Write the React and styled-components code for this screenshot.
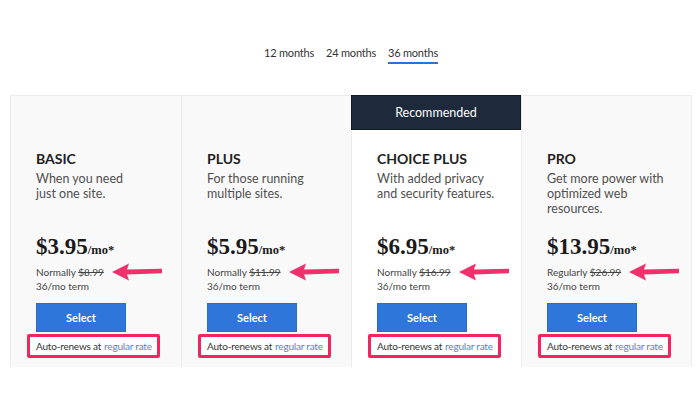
import React from "react";
import styled, { createGlobalStyle } from "styled-components";

const plans = [
  {
    name: "BASIC",
    desc: ["When you need", "just one site."],
    price: "$3.95",
    label: "Normally",
    old: "$8.99",
  },
  {
    name: "PLUS",
    desc: ["For those running", "multiple sites."],
    price: "$5.95",
    label: "Normally",
    old: "$11.99",
  },
  {
    name: "CHOICE PLUS",
    desc: ["With added privacy", "and security features."],
    price: "$6.95",
    label: "Normally",
    old: "$16.99",
    recommended: true,
  },
  {
    name: "PRO",
    desc: ["Get more power with", "optimized web", "resources."],
    price: "$13.95",
    label: "Regularly",
    old: "$26.99",
  },
];

const GlobalStyle = createGlobalStyle`
  body {
    margin: 0;
    background: #fff;
    font-family: Lato, "Open Sans", sans-serif;
    color: #2d2d2d;
  }
`;

const Page = styled.div`
  width: 700px;
  height: 420px;
  overflow: hidden;
`;

const Tabs = styled.div`
  display: flex;
  justify-content: center;
  gap: 12px;
  padding: 44px 0 0 2px;
  margin-bottom: 31px;
`;

const Tab = styled.div`
  font-size: 11px;
  letter-spacing: -0.2px;
  color: #333;
  height: 20px;
  line-height: 17px;
  box-sizing: border-box;
  border-bottom: 2px solid ${(p) => (p.active ? "#2f6fd6" : "transparent")};
`;

const Grid = styled.div`
  display: grid;
  grid-template-columns: repeat(4, 1fr);
  width: 682px;
  margin-left: 10px;
  border: 1px solid #ececec;
  border-bottom: none;
  box-sizing: border-box;
`;

const Card = styled.div`
  display: flex;
  flex-direction: column;
  min-width: 0;
  background: ${(p) => (p.recommended ? "#fff" : "#f9f9f9")};
  border-left: ${(p) => (p.first ? "none" : "1px solid #ececec")};
`;

const Banner = styled.div`
  height: 33px;
  margin: -1px 0 0 -1px;
  background: #1e293b;
  border: 1px solid #111827;
  color: #fff;
  font-size: 12.5px;
  display: flex;
  align-items: center;
  justify-content: center;
`;

const Body = styled.div`
  display: flex;
  flex-direction: column;
  align-items: flex-start;
  padding: ${(p) => (p.recommended ? "20px" : "54px")} 0 9px 25px;
`;

const Title = styled.div`
  font-size: 14px;
  font-weight: 700;
  line-height: 17px;
  color: #222;
`;

const Desc = styled.div`
  margin-top: 4px;
  font-size: 12.5px;
  line-height: 15px;
  color: #505050;
  height: 45px;
  white-space: nowrap;
`;

const Price = styled.div`
  margin-top: 18px;
  font-family: "Liberation Serif", serif;
  font-weight: 700;
  font-size: 23px;
  line-height: 26px;
  color: #1a1a1a;
`;

const Per = styled.span`
  font-size: 12.5px;
`;

const Note = styled.div`
  margin-top: 2px;
  display: flex;
  align-items: center;
  gap: 8px;
  font-size: 10px;
  line-height: 14px;
  color: #444;
  height: 14px;
  white-space: nowrap;

  svg {
    display: block;
    margin: -3px 0;
  }
`;

const Old = styled.s`
  color: #444;
`;

const Term = styled.div`
  font-size: 10px;
  line-height: 14px;
  color: #444;
`;

const Button = styled.button`
  margin-top: 10px;
  width: 90px;
  height: 29px;
  border: 1px solid #2a6bcf;
  background: #2f76db;
  color: #fff;
  font-family: Lato, sans-serif;
  font-weight: 700;
  font-size: 11px;
  cursor: pointer;
`;

const Renew = styled.div`
  margin: 2px 0 0 -9px;
  height: 24px;
  box-sizing: border-box;
  padding: 0 5px 0 6px;
  border: 3px solid #f2255f;
  border-radius: 2px;
  background: #fff;
  display: flex;
  align-items: center;
  font-size: 10px;
  letter-spacing: -0.2px;
  color: #333;
  white-space: nowrap;
`;

const Link = styled.a`
  color: #4a86e0;
  margin-left: 3px;
  text-decoration: none;
`;

const Arrow = () => (
  <svg width="50" height="20" viewBox="0 0 50 20">
    <path
      d="M0 10 L17 1.5 L15 7.6 L50 6.8 L50 11.2 L15 12.4 L17 18.5 Z"
      fill="#f0306c"
    />
  </svg>
);

const App = () => {
  return (
    <Page>
      <GlobalStyle />
      <Tabs>
        <Tab>12 months</Tab>
        <Tab>24 months</Tab>
        <Tab active>36 months</Tab>
      </Tabs>
      <Grid>
        {plans.map((plan, index) => (
          <Card key={index} first={index === 0} recommended={plan.recommended}>
            {plan.recommended && <Banner>Recommended</Banner>}
            <Body recommended={plan.recommended}>
              <Title>{plan.name}</Title>
              <Desc>
                {plan.desc.map((line, i) => (
                  <div key={i}>{line}</div>
                ))}
              </Desc>
              <Price>
                {plan.price}
                <Per>/mo*</Per>
              </Price>
              <Note>
                <span>
                  {plan.label} <Old>{plan.old}</Old>
                </span>
                <Arrow />
              </Note>
              <Term>36/mo term</Term>
              <Button>Select</Button>
              <Renew>
                Auto-renews at <Link href="#">regular rate</Link>
              </Renew>
            </Body>
          </Card>
        ))}
      </Grid>
    </Page>
  );
};

export default App;
